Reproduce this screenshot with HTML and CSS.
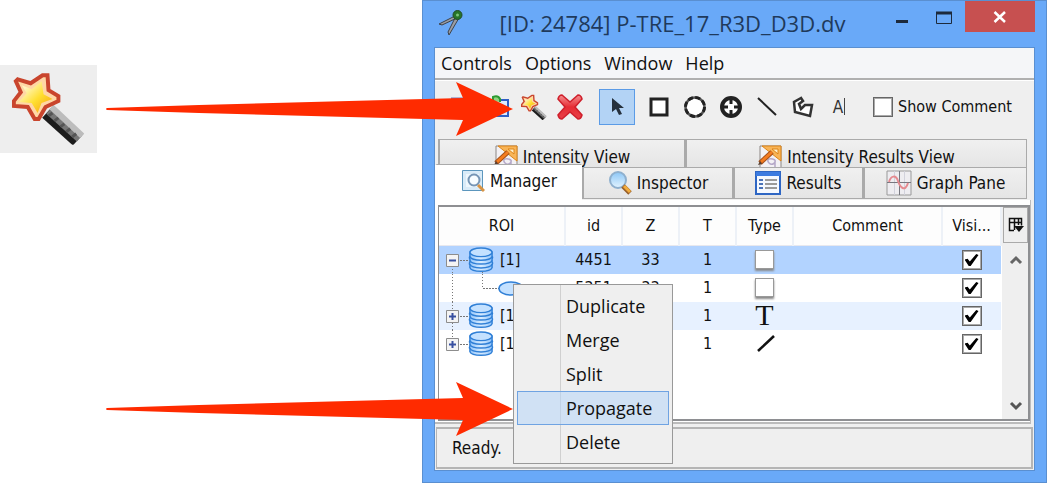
FILE: index.html
```html
<!DOCTYPE html>
<html lang="en">
<head>
<meta charset="utf-8">
<title>[ID: 24784] P-TRE_17_R3D_D3D.dv</title>
<link rel="stylesheet" href="styles.css">
</head>
<body>
<svg class="defs" aria-hidden="true">
  <defs>
    <linearGradient id="gold" x1="0" y1="0" x2="1" y2="1"><stop offset="0.2" stop-color="#fff6c0"/><stop offset="0.55" stop-color="#ffdf30"/><stop offset="1" stop-color="#f49a10"/></linearGradient>
    <linearGradient id="disc" x1="0" x2="1"><stop offset="0" stop-color="#8fc3fa"/><stop offset="0.5" stop-color="#d8ecff"/><stop offset="1" stop-color="#8fc3fa"/></linearGradient>
    <linearGradient id="redx" x1="0" y1="0" x2="0" y2="1"><stop offset="0" stop-color="#f59090"/><stop offset="0.5" stop-color="#e62c34"/><stop offset="1" stop-color="#e84048"/></linearGradient>
    <linearGradient id="lens" x1="0" y1="0" x2="0" y2="1"><stop offset="0" stop-color="#8cc6f6"/><stop offset="1" stop-color="#e4f4ff"/></linearGradient>
    <symbol id="wand" viewBox="12 6 74 74">
      <path d="M47 48L78 76" stroke="#1c1c1c" stroke-width="13"/>
      <path d="M50 45L81 73" stroke="#777" stroke-width="10"/>
      <path d="M52 42L83 71" stroke="#bcbcbc" stroke-width="6"/>
      <path d="M49 51l4-3M55 56l4-3M61 62l4-3M67 67l4-3M73 72l4-3" stroke="#555" stroke-width="3"/>
      <path d="M18 14l13 4 12-8h5l1 15 10 6v5l-13 6-7 12h-4l-7-12-14-1v-5l7-9-5-11z" fill="#ffd7a5" stroke="#c9452d" stroke-width="4"/>
      <path d="M22 20l10 4 10-8 2 13 9 5-11 4-4 10-6-10-13-1 8-9z" fill="url(#gold)"/>
    </symbol>
    <symbol id="database" viewBox="0 0 26 27">
      <path d="M1.500 5.500v4q-1 2 0 3v3q-1 2 0 3v3c2 5 21 5 23 0v-3q1-2 0-3v-3q1-2 0-3v-4z" fill="url(#disc)" stroke="#2f7fd6" stroke-width="1.500"/>
      <path d="M1.500 10c2 5 21 5 23 0M1.500 14c2 5 21 5 23 0M1.500 18c2 5 21 5 23 0" fill="none" stroke="#2f7fd6" stroke-width="1.500"/>
      <ellipse cx="13" cy="5.500" rx="11.500" ry="4.500" fill="#c4e1ff" stroke="#2f7fd6" stroke-width="1.500"/>
    </symbol>
    <symbol id="measure" viewBox="0 0 24 24">
      <path d="M2 1h21v23H2z" fill="#f3f1f4" stroke="#8c8784"/>
      <path d="M17 15c-6-3-9 0-6 3s7 0 6-3v7" fill="none" stroke="#b5a8c8" stroke-width="1.500"/>
      <path d="M4 1h19v15z" fill="#f8b457" stroke="#dd8518"/><path d="M14 4h6v5z" fill="#fff0cc" stroke="#dd8518"/>
      <path d="M2 18l12-11" stroke="#a3501b" stroke-width="5"/><path d="M3 17l11-10" stroke="#f47c20" stroke-width="3"/>
      <path d="M0 20l4-1-2-3z" fill="#5a4030"/>
    </symbol>
  </defs>
</svg>
<main class="stage">
  <aside class="callout">
    <svg class="callout-icon" viewBox="0 0 98 88" role="img" aria-label="Magic wand"><use href="#wand" x="12" y="6" width="74" height="74"/></svg>
  </aside>

  <section class="window">
    <header class="titlebar">
      <svg class="app-icon" viewBox="0 0 26 26" aria-hidden="true"><path d="M19 5L1 14l3 1 15-7zM18 6l-8 16 1 3L21 8z" fill="#9a9da3" stroke="#3d424a"/><circle cx="19.500" cy="5" r="4.500" fill="#26752a" stroke="#234b28"/><circle cx="19.500" cy="5" r="1.500" fill="#7bc67b"/></svg>
      <h1 class="title">[ID: 24784] P-TRE_17_R3D_D3D.dv</h1>
      <div class="win-controls">
        <button class="win-btn" aria-label="Minimize"><svg width="16" height="26"><path d="M2 17.500h12" stroke="#1d2a3c" stroke-width="3"/></svg></button>
        <button class="win-btn" aria-label="Maximize"><svg width="16" height="26"><path d="M.500 8.500h15v11H.500z" fill="none" stroke="#1d2a3c"/><path d="M0 9h16" stroke="#1d2a3c" stroke-width="3"/></svg></button>
        <button class="win-btn close" aria-label="Close"><svg width="14" height="14"><path d="M1.500 2l10.500 10M12 2L1.500 12" stroke="#fff" stroke-width="2.500"/></svg></button>
      </div>
    </header>

    <div class="client">
      <nav class="menubar">
        <button>Controls</button><button>Options</button><button>Window</button><button>Help</button>
      </nav>

      <div class="toolbar">
        <button aria-label="Load"><svg width="24" height="24"><path d="M2 3.500h20v17H2z" fill="#fff" stroke="#7777b5" stroke-width="2"/></svg></button>
        <button aria-label="Save"><svg width="24" height="26"><path d="M2 6h20v16H2z" fill="#dcebff" stroke="#2f5fc4" stroke-width="2"/><path d="M7 7V3q5-2 7 2v3" fill="#91d17e" stroke="#2c9b32" stroke-width="2"/></svg></button>
        <button aria-label="Propagate wizard"><svg width="26" height="26"><use href="#wand" width="26" height="26"/></svg></button>
        <button aria-label="Delete"><svg width="28" height="28" viewBox="0 0 28 28"><path d="M6 2l8 7 8-7q3 0 4 4l-7 8 7 8q-1 4-4 4l-8-7-8 7q-3 0-4-4l7-8-7-8q1-4 4-4z" fill="url(#redx)" stroke="#cf1f2b" stroke-width="1.500"/></svg></button>
        <button class="selected" aria-label="Select"><svg width="16" height="18"><path d="M3 0v14l4-3 3 6 3-1-3-6h5z" fill="#25303c"/></svg></button>
        <button aria-label="Rectangle"><svg width="20" height="20"><path d="M2 2h16v16H2z" fill="#fff" stroke="#222" stroke-width="3"/></svg></button>
        <button aria-label="Ellipse"><svg width="24" height="24"><circle cx="12" cy="12" r="9.500" fill="#fff" stroke="#555" stroke-width="2.500"/><circle cx="12" cy="12" r="9.500" fill="none" stroke="#222" stroke-width="3" stroke-dasharray="5 2.460"/></svg></button>
        <button aria-label="Point"><svg width="24" height="24"><circle cx="12" cy="12" r="9" fill="#fff" stroke="#222" stroke-width="4"/><path d="M12 2v7M12 15v7M2 12h7M15 12h7" stroke="#222" stroke-width="3"/></svg></button>
        <button aria-label="Line"><svg width="20" height="20"><path d="M1 1l18 17" stroke="#222" stroke-width="2"/></svg></button>
        <button aria-label="Polygon"><svg width="24" height="24"><path d="M10 3L3 7l1 10 15 4 2-11h-7l-4 4-2-5 4-3z" fill="#fff" stroke="#333" stroke-width="2.500"/></svg></button>
        <button class="text-tool" aria-label="Text">A<i></i></button>
        <label class="show-comment"><input type="checkbox">Show Comment</label>
      </div>

      <div class="tabs upper">
        <button class="tab"><svg width="24" height="24"><use href="#measure" width="24" height="24"/></svg>Intensity View</button>
        <button class="tab"><svg width="24" height="24"><use href="#measure" width="24" height="24"/></svg>Intensity Results View</button>
      </div>
      <div class="tabs lower">
        <button class="tab active"><svg width="24" height="24"><path d="M1.500 1.500h20v20h-20z" fill="#d9ebf8" stroke="#5c96bd"/><path d="M5 5h13v13H5z" fill="#eef7fd"/><circle cx="13" cy="11" r="5.500" fill="#f7fcff" stroke="#7695b5" stroke-width="2"/><path d="M17 16l6 6" stroke="#d99443" stroke-width="3"/></svg>Manager</button>
        <button class="tab"><svg width="24" height="24"><circle cx="10" cy="9" r="8" fill="url(#lens)" stroke="#8fb0ce" stroke-width="2"/><path d="M15 15l7 7" stroke="#99602a" stroke-width="5"/><path d="M16 15l6 6" stroke="#f2ac3d" stroke-width="3"/></svg>Inspector</button>
        <button class="tab"><svg width="26" height="24"><path d="M1 1h24v22H1z" fill="#f5f9ff" stroke="#2e66c4" stroke-width="2"/><path d="M1 3h24" stroke="#3c7be0" stroke-width="4"/><path d="M4 9h4M4 13h4M4 17h4" stroke="#4b73b8" stroke-width="2"/><path d="M10 9h12M10 13h12M10 17h12" stroke="#9a9a9a" stroke-width="2"/></svg>Results</button>
        <button class="tab"><svg width="26" height="26"><path d="M1 1h24v24H1z" fill="#eeedf1" stroke="#999"/><path d="M8.500 1v24M18.500 1v24" stroke="#d2d2dc"/><path d="M1 12.500h24M13.500 1v24" stroke="#77777f"/><path d="M3 12c2-7 7-7 9-1s7 12 10 2" fill="none" stroke="#e58a90" stroke-width="2"/></svg>Graph Pane</button>
      </div>

      <div class="pane">
        <div class="table-wrap">
          <table class="roi-table">
            <colgroup><col class="c-roi"><col class="c-s"><col class="c-s"><col class="c-s"><col class="c-s"><col><col class="c-vis"></colgroup>
            <thead><tr><th>ROI</th><th>id</th><th>Z</th><th>T</th><th>Type</th><th>Comment</th><th>Visi...</th></tr></thead>
            <tbody>
              <tr class="current">
                <td><div class="tree"><svg width="56" height="28"><path d="M13.500 20v8M43.500 26v2" stroke="#777" stroke-dasharray="1 2"/><path d="M21 14.500h9" stroke="#777" stroke-dasharray="2 1"/><path d="M7.500 8.500h12v12h-12z" fill="#f4f4f4" stroke="#8d8d8d"/><path d="M10 14.500h7" stroke="#3850a0" stroke-width="2"/><use href="#database" x="29" y="1" width="26" height="26"/></svg><span>[1]</span></div></td>
                <td>4451</td><td>33</td><td>1</td><td><i class="rect"></i></td><td></td><td><input type="checkbox" checked aria-label="Visible"></td>
              </tr>
              <tr>
                <td><div class="tree"><svg width="86" height="28"><path d="M13.500 0v28M43.500 0v14" stroke="#777" stroke-dasharray="1 2"/><path d="M44 14.500h16" stroke="#777" stroke-dasharray="2 1"/><ellipse cx="72" cy="14.500" rx="12" ry="6.500" fill="#c4e1ff" stroke="#2f7fd6" stroke-width="1.500"/></svg></div></td>
                <td>5351</td><td>33</td><td>1</td><td><i class="rect"></i></td><td></td><td><input type="checkbox" checked aria-label="Visible"></td>
              </tr>
              <tr class="stripe">
                <td><div class="tree"><svg width="56" height="28"><path d="M13.500 0v28" stroke="#777" stroke-dasharray="1 2"/><path d="M21 14.500h9" stroke="#777" stroke-dasharray="2 1"/><path d="M7.500 8.500h12v12h-12z" fill="#f4f4f4" stroke="#8d8d8d"/><path d="M10 14.500h7M13.500 11v7" stroke="#3850a0" stroke-width="2"/><use href="#database" x="29" y="1" width="26" height="26"/></svg><span>[1]</span></div></td>
                <td></td><td></td><td>1</td><td><span class="serif-t">T</span></td><td></td><td><input type="checkbox" checked aria-label="Visible"></td>
              </tr>
              <tr>
                <td><div class="tree"><svg width="56" height="28"><path d="M13.500 0v8" stroke="#777" stroke-dasharray="1 2"/><path d="M21 14.500h9" stroke="#777" stroke-dasharray="2 1"/><path d="M7.500 8.500h12v12h-12z" fill="#f4f4f4" stroke="#8d8d8d"/><path d="M10 14.500h7M13.500 11v7" stroke="#3850a0" stroke-width="2"/><use href="#database" x="29" y="1" width="26" height="26"/></svg><span>[1]</span></div></td>
                <td></td><td></td><td>1</td><td><svg width="20" height="20"><path d="M3 17L19 2" stroke="#111" stroke-width="2.500"/></svg></td><td></td><td><input type="checkbox" checked aria-label="Visible"></td>
              </tr>
            </tbody>
          </table>
          <div class="scroll">
            <button class="col-btn" aria-label="Columns"><svg width="16" height="18"><path d="M6 14.500H1.500v-12h12v7M1 6.500h13M6.500 2v12M10.500 2v7" fill="none" stroke="#111" stroke-width="1.500"/><path d="M6 10h10l-5 6z" fill="#111"/></svg></button>
            <button class="arrow-btn" aria-label="Scroll up"><svg width="14" height="12"><path d="M2 9l5-5 5 5" fill="none" stroke="#666" stroke-width="3"/></svg></button>
            <button class="arrow-btn down" aria-label="Scroll down"><svg width="14" height="12"><path d="M2 3l5 5 5-5" fill="none" stroke="#555" stroke-width="3"/></svg></button>
          </div>
        </div>
        <div class="context-menu" role="menu">
          <button role="menuitem">Duplicate</button>
          <button role="menuitem">Merge</button>
          <button role="menuitem">Split</button>
          <button role="menuitem" class="hot">Propagate</button>
          <button role="menuitem">Delete</button>
        </div>
      </div>
      <footer class="status">Ready.</footer>
    </div>
  </section>

  <svg class="pointer first" width="410" height="56" aria-hidden="true"><path d="M2 26l92-3 264-7-7-16 57 27-57 27 7-16-264-7-92-3q-2-1 0-2z" fill="#ff2b00"/></svg>
  <svg class="pointer second" width="410" height="56" aria-hidden="true"><path d="M2 26l92-3 264-7-7-16 57 27-57 27 7-16-264-7-92-3q-2-1 0-2z" fill="#ff2b00"/></svg>
</main>
</body>
</html>
```
FILE: styles.css
```css
* { box-sizing: border-box; }
body { margin: 0; background: #fff; color: #111; font: 16px/20px "DejaVu Sans Condensed", "Noto Sans", sans-serif; }
button { margin: 0; padding: 0; border: 0; background: none; color: inherit; font: inherit; }
.defs { position: absolute; width: 0; height: 0; }
.stage { position: relative; display: grid; grid-template-columns: 422px minmax(0, 1fr); padding-right: 1px; }
.callout { padding-top: 65px; }
.callout-icon { display: block; width: 97px; height: 88px; background: #eee; }

.window { border: 1px solid #5a8fd0; background: #69a9f8; padding: 0 11px 11px; }
.titlebar { display: flex; height: 46px; padding-left: 4px; }
.app-icon { width: 26px; height: 26px; margin-top: 9px; }
.title { flex: 1; margin: 0; padding-top: 6px; text-align: center; font: 22px/32px "Open Sans", "Noto Sans", sans-serif; color: #1f3a5c; }
.win-controls { display: flex; align-items: flex-start; }
.win-btn { width: 42px; height: 31px; display: grid; place-items: center; }
.win-btn.close { width: 70px; background: #c75050; }

.client { border: 1px solid #5a8fd0; background: #efefef; }
.menubar { display: flex; gap: 13px; height: 32px; padding: 0 6px; background: #f5f6f8; border-bottom: 2px solid #b0b0b0; font: 18px/30px "Open Sans", "Noto Sans", sans-serif; }
.toolbar { display: flex; align-items: center; height: 59px; padding: 0 0 7px 9px; border-top: 1px solid #fff; }
.toolbar button { width: 36px; height: 36px; flex: none; display: grid; place-items: center; }
.toolbar .selected { margin: 0 6px 0 11px; background: #b3d3f5; border: 1px solid #5b9be6; }
.toolbar .text-tool { display: flex; align-items: center; justify-content: center; gap: 1px; color: #333; font-size: 17px; }
.text-tool i { width: 1px; height: 17px; background: #444; }
.show-comment { display: flex; align-items: center; gap: 5px; margin-left: 16px; white-space: nowrap; }
input[type="checkbox"] { appearance: none; width: 20px; height: 20px; margin: 0; border: 1px solid #666; background: #fff; outline: 1px solid #aaa; outline-offset: -2px; display: inline-grid; place-items: center; vertical-align: middle; }
input[type="checkbox"]:checked::before { content: ""; width: 14px; height: 12px; background: #000; clip-path: polygon(0 45%, 22% 40%, 38% 62%, 84% 0, 100% 8%, 44% 100%, 30% 100%); }

.tabs { display: grid; margin: 0 7px 0 3px; font-size: 17px; }
.upper { grid-template-columns: 247fr 342fr; }
.lower { grid-template-columns: 144fr 151fr 130fr 164fr; }
.tab { display: flex; align-items: center; justify-content: center; gap: 5px; height: 32px; border: 1px solid #aaa; border-left-width: 2px; border-bottom: 0; background: linear-gradient(#f0f0f0, #e5e5e5); white-space: nowrap; }
.upper .tab { height: 28px; padding-top: 6px; overflow: hidden; }
.tab svg { flex: none; }
.lower .tab { border-bottom: 1px solid #aaa; }
.lower .active { height: 36px; margin: -3px 0 0 -3px; padding-bottom: 2px; background: #fff; border-color: #fff; border-top-color: #aaa; }

.pane { position: relative; margin-right: 3px; padding: 5px 0 1px 3px; background: #fff; border-right: 1px solid #bbb; border-bottom: 2px solid #bbb; }
.table-wrap { display: flex; height: 216px; border: 1px solid #8e8f92; border-width: 2px 2px 2px 1px; }
.roi-table { flex: 1; width: 0; height: 150px; border-collapse: collapse; table-layout: fixed; align-self: flex-start; }
.c-roi { width: 126px; }
.c-s { width: 57px; }
.c-vis { width: 59px; }
.roi-table th { height: 38px; padding: 0; font-weight: normal; border-right: 2px solid #edf1f7; border-bottom: 1px solid #e8e8ee; background: #fdfdfd; }
.roi-table td { height: 28px; padding: 0; line-height: 26px; text-align: center; }
.roi-table td > svg, .roi-table td > i { display: block; margin: 0 auto; }
.current { background: #b2d3ff; }
.stripe { background: #e7f1ff; }
.tree { display: flex; align-items: center; gap: 5px; }
.rect { width: 19px; height: 19px; background: #fff; border: 1px solid #999; box-shadow: 0 2px 2px #888; }
.serif-t { display: block; height: 26px; font: 30px/24px "Liberation Serif", serif; }
.scroll { display: flex; flex-direction: column; width: 26px; padding-left: 1px; background: #efefef; }
.col-btn { height: 36px; border: 1px solid #aaa; display: grid; place-items: center; }
.arrow-btn { height: 26px; margin-top: 4px; display: grid; place-items: center; }
.arrow-btn.down { margin-top: auto; }

.context-menu { position: absolute; left: 78px; top: 84px; width: 160px; padding: 4px 3px; border: 1px solid #999; background: linear-gradient(90deg, #efefef 46px, #d0d0d0 46px, #d0d0d0 47px, #efefef 47px); font: 18px/32px "Open Sans", "Noto Sans", sans-serif; }
.context-menu button { display: block; width: 100%; height: 34px; padding-left: 48px; border: 1px solid transparent; text-align: left; }
.context-menu .hot { border-color: #6fa3e2; background: rgba(178, 211, 250, 0.5); }

.status { margin: 3px 1px 1px; height: 42px; padding-left: 15px; border: 2px solid #b5b5b5; border-left-width: 1px; font-size: 17px; line-height: 39px; }

.pointer { position: absolute; left: 105px; }
.first { top: 82px; }
.second { top: 382px; }
```
